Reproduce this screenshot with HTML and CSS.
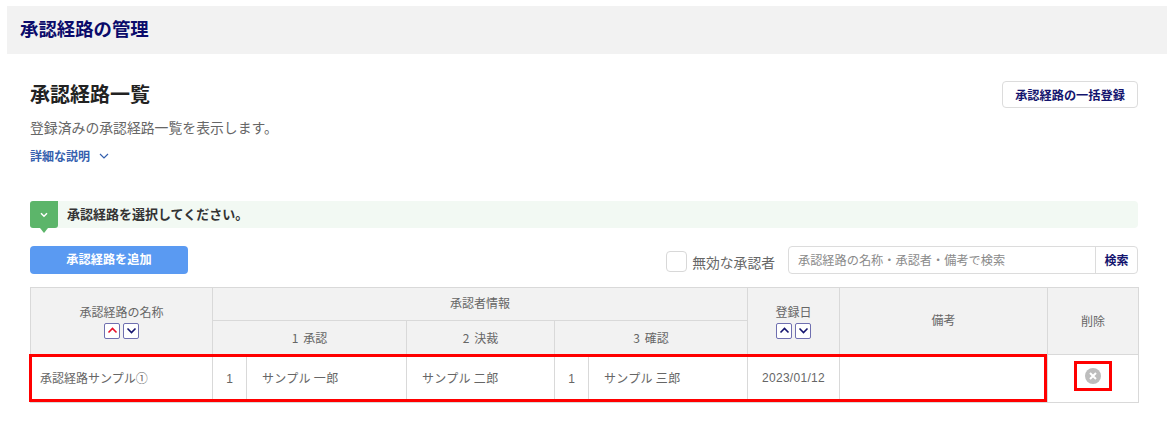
FILE: index.html
```html
<!DOCTYPE html>
<html lang="ja">
<head>
<meta charset="utf-8">
<title>承認経路の管理</title>
<link rel="stylesheet" href="styles.css">
</head>
<body>
<header class="page-head"><h1>承認経路の管理</h1></header>
<main class="content">
  <div class="intro">
    <div class="intro-text">
      <h2>承認経路一覧</h2>
      <p class="desc">登録済みの承認経路一覧を表示します。</p>
      <a class="more">詳細な説明
        <svg class="more-icon" width="10" height="6" viewBox="0 0 10 6"><path d="M1 1l4 4 4-4" fill="none" stroke="#3560ae" stroke-width="1.2"/></svg>
      </a>
    </div>
    <button class="btn-bulk">承認経路の一括登録</button>
  </div>
  <div class="notice">
    <span class="notice-flag">
      <svg width="8" height="6" viewBox="0 0 8 6"><path d="M1 1.2l3 3 3-3" fill="none" stroke="#fff" stroke-width="1.5"/></svg>
    </span>
    <span class="notice-text">承認経路を選択してください。</span>
  </div>
  <div class="tools">
    <button class="btn-add">承認経路を追加</button>
    <div class="filters">
      <label class="check"><span class="check-box"></span>無効な承認者</label>
      <div class="search">
        <span class="search-input">承認経路の名称・承認者・備考で検索</span>
        <span class="search-btn">検索</span>
      </div>
    </div>
  </div>
  <div class="table-wrap">
    <table class="routes">
      <colgroup>
        <col class="c-name"><col class="c-num"><col class="c-p1"><col class="c-p2"><col class="c-num"><col class="c-p3"><col class="c-date"><col class="c-note"><col class="c-del">
      </colgroup>
      <thead>
        <tr class="row-a">
          <th rowspan="2">承認経路の名称
            <div class="sort"><span class="sort-btn"><svg width="11" height="7" viewBox="0 0 11 7"><path d="M1.500 5.500l4-4 4 4" fill="none" stroke="#e8102a" stroke-width="1.600"/></svg></span><span class="sort-btn"><svg width="11" height="7" viewBox="0 0 11 7"><path d="M1.500 1.500l4 4 4-4" fill="none" stroke="#14146e" stroke-width="1.600"/></svg></span></div>
          </th>
          <th colspan="5" class="group">承認者情報</th>
          <th rowspan="2">登録日
            <div class="sort"><span class="sort-btn"><svg width="11" height="7" viewBox="0 0 11 7"><path d="M1.500 5.500l4-4 4 4" fill="none" stroke="#14146e" stroke-width="1.600"/></svg></span><span class="sort-btn"><svg width="11" height="7" viewBox="0 0 11 7"><path d="M1.500 1.500l4 4 4-4" fill="none" stroke="#14146e" stroke-width="1.600"/></svg></span></div>
          </th>
          <th rowspan="2" class="group">備考</th>
          <th rowspan="2">削除</th>
        </tr>
        <tr class="row-b">
          <th colspan="2">1 承認</th>
          <th>2 決裁</th>
          <th colspan="2">3 確認</th>
        </tr>
      </thead>
      <tbody>
        <tr class="row-c">
          <td class="name">承認経路サンプル①</td>
          <td class="num">1</td>
          <td class="person">サンプル 一郎</td>
          <td class="person">サンプル 二郎</td>
          <td class="num">1</td>
          <td class="person">サンプル 三郎</td>
          <td class="date">2023/01/12</td>
          <td></td>
          <td class="del"><svg width="16" height="16" viewBox="0 0 16 16"><circle cx="8" cy="8" r="8" fill="#bdbdbd"/><path d="M5 5l6 6M11 5l-6 6" stroke="#fff" stroke-width="2"/></svg></td>
        </tr>
      </tbody>
    </table>
    <div class="mark mark-row"></div>
    <div class="mark mark-del"></div>
  </div>
</main>
</body>
</html>
```
FILE: styles.css
```css
* { box-sizing: border-box; }
html, body { margin: 0; padding: 0; }
body {
  width: 1167px;
  height: 422px;
  overflow: hidden;
  background: #fff;
  color: #555;
  font-family: "Noto Sans CJK JP", "Liberation Sans", sans-serif;
  font-size: 12px;
  padding: 6px 0 0 7px;
}
.page-head {
  height: 48px;
  background: #f2f2f2;
  display: flex;
  align-items: center;
  padding: 0 0 3px 13px;
}
.page-head h1 { margin: 0; font-size: 18.4px; line-height: 1; font-weight: 700; color: #0b0b6b; }
.content { padding: 26px 29px 0 23px; }
.intro { display: flex; justify-content: space-between; align-items: flex-start; height: 120px; }
.intro-text h2 { margin: 0; font-size: 20px; line-height: 28px; font-weight: 700; color: #222; }
.desc { margin: 9px 0 0; font-size: 13.85px; line-height: 20px; color: #666; }
.more { display: flex; align-items: center; margin-top: 10px; font-size: 12px; line-height: 18px; font-weight: 700; color: #3560ae; }
.more-icon { margin-left: 9px; }
.btn-bulk {
  width: 136px;
  height: 27px;
  margin-top: 1px;
  padding: 0;
  background: #fff;
  border: 1px solid #dcdcdc;
  border-radius: 4px;
  font: 700 12.2px "Noto Sans CJK JP", sans-serif;
  color: #14146e;
}
.notice {
  display: flex;
  align-items: center;
  height: 27px;
  background: #f2f9f3;
  border-radius: 4px;
  margin-top: 1px;
}
.notice-flag {
  position: relative;
  width: 28px;
  height: 27px;
  background: #5cb56a;
  border-radius: 3px 0 3px 3px;
  display: flex;
  align-items: center;
  justify-content: center;
}
.notice-flag::after {
  content: "";
  position: absolute;
  left: 10px;
  top: 27px;
  border: 4px solid transparent;
  border-top: 5px solid #5cb56a;
  border-bottom: 0;
}
.notice-text { margin: 0 0 3px 9px; font-size: 13px; font-weight: 700; color: #333; }
.tools { display: flex; justify-content: space-between; align-items: center; height: 28px; margin-top: 18px; }
.btn-add {
  width: 158px;
  height: 28px;
  padding: 0 0 2px;
  border: 0;
  border-radius: 4px;
  background: #5a9af2;
  color: #fff;
  font: 700 12.2px "Noto Sans CJK JP", sans-serif;
}
.filters { display: flex; align-items: center; }
.check { display: flex; align-items: center; font-size: 13.8px; color: #666; margin-top: 3px; }
.check-box { width: 21px; height: 21px; border: 1px solid #d8d8d8; border-radius: 4px; margin-right: 5px; background: #fff; }
.search {
  display: flex;
  width: 350px;
  height: 28px;
  margin-left: 13px;
  border: 1px solid #dcdcdc;
  border-radius: 4px;
}
.search-input { flex: 1; display: flex; align-items: center; padding: 0 0 1px 9px; font-size: 12.2px; color: #8a8a8a; }
.search-btn { width: 42px; border-left: 1px solid #dcdcdc; display: flex; align-items: center; justify-content: center; padding-bottom: 1px; font-weight: 700; color: #14146e; }
.table-wrap { position: relative; margin-top: 13px; }
.routes { border-collapse: collapse; table-layout: fixed; width: 1108px; }
.c-name { width: 182px; }
.c-num { width: 34px; }
.c-p1 { width: 160px; }
.c-p2 { width: 148px; }
.c-p3 { width: 159px; }
.c-date { width: 92px; }
.c-note { width: 208px; }
.c-del { width: 91px; }
.routes th, .routes td { border: 1px solid #d9d9d9; padding: 0; font-size: 12px; }
.routes th { background: #f2f2f2; font-weight: 400; color: #666; text-align: center; line-height: 16px; }
.routes td { background: #fff; color: #666; }
.routes th.group { padding-bottom: 2px; }
.row-a { height: 33px; }
.row-b { height: 34px; word-spacing: 2px; }
.row-c { height: 48px; }
.routes .name { padding: 0 0 2px 9px; }
.num { text-align: center; font-family: "Liberation Sans", sans-serif; }
.routes .person { padding: 0 0 3px 15px; letter-spacing: .3px; }
.routes .date { padding-bottom: 1px; text-align: center; font-family: "Liberation Sans", sans-serif; letter-spacing: .3px; }
.routes .del { padding-bottom: 5px; text-align: center; vertical-align: middle; line-height: 0; }
.sort { display: flex; justify-content: center; gap: 3px; margin-top: 3px; }
.sort-btn {
  width: 16px;
  height: 16px;
  border: 1px solid #6f6fb0;
  border-radius: 2px;
  background: #fff;
  display: flex;
  align-items: center;
  justify-content: center;
}
.mark { position: absolute; border: 3px solid #f00; }
.mark-row { left: -1px; top: 67px; width: 1018px; height: 48px; }
.mark-del { left: 1044px; top: 74px; width: 38px; height: 30px; }
```
